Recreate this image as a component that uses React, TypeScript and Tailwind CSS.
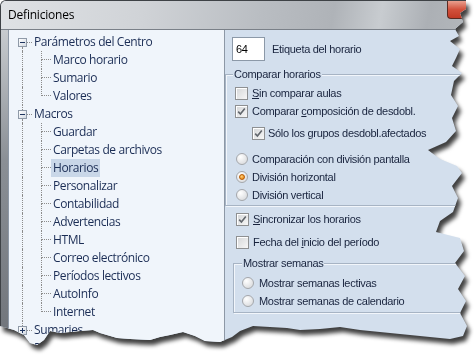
import React from "react";

const dot = "border-dotted border-[#8c8c8c]";

function Expander({ plus }: { plus?: boolean }) {
  return (
    <div className="grid h-[9px] w-[9px] shrink-0 place-items-center border border-[#8f9aa8] bg-gradient-to-br from-white to-[#d3dae3]">
      <div className="h-px w-[5px] bg-[#1e3560] [grid-area:1/1]" />
      {plus && <div className="h-[5px] w-px bg-[#1e3560] [grid-area:1/1]" />}
    </div>
  );
}

type TreeItem = {
  label: string;
  level: 0 | 1;
  plus?: boolean;
  first?: boolean;
  last?: boolean;
  selected?: boolean;
};

const items: TreeItem[] = [
  { label: "Parámetros del Centro", level: 0, first: true },
  { label: "Marco horario", level: 1 },
  { label: "Sumario", level: 1 },
  { label: "Valores", level: 1, last: true },
  { label: "Macros", level: 0 },
  { label: "Guardar", level: 1 },
  { label: "Carpetas de archivos", level: 1 },
  { label: "Horarios", level: 1, selected: true },
  { label: "Personalizar", level: 1 },
  { label: "Contabilidad", level: 1 },
  { label: "Advertencias", level: 1 },
  { label: "HTML", level: 1 },
  { label: "Correo electrónico", level: 1 },
  { label: "Períodos lectivos", level: 1 },
  { label: "AutoInfo", level: 1 },
  { label: "Internet", level: 1, last: true },
  { label: "Sumaries", level: 0, plus: true },
  { label: "Datos", level: 0, plus: true },
];

function TreeRow({ it }: { it: TreeItem }) {
  const label = (
    <span
      className={`h-full whitespace-nowrap px-[2px] leading-[18px] ${
        it.selected ? "bg-[#c9d7e8]" : ""
      }`}
    >
      {it.label}
    </span>
  );
  if (it.level === 0) {
    return (
      <div className="flex h-[18px] items-center pl-[9px]">
        <div className="flex h-full w-[9px] shrink-0 flex-col items-center">
          <div className={`w-0 flex-1 ${it.first ? "" : `border-l ${dot}`}`} />
          <Expander plus={it.plus} />
          <div className={`w-0 flex-1 border-l ${dot}`} />
        </div>
        <div className={`w-[5px] shrink-0 border-t ${dot}`} />
        {label}
      </div>
    );
  }
  return (
    <div className="flex h-[18px] items-center pl-[9px]">
      <div className="flex h-full w-[9px] shrink-0 justify-center">
        <div className={`h-full w-0 border-l ${dot}`} />
      </div>
      <div className="w-[14px] shrink-0" />
      <div className="flex h-full w-[10px] shrink-0 flex-col">
        <div className={`h-[9px] border-b border-l ${dot}`} />
        <div className={`flex-1 ${it.last ? "" : `border-l ${dot}`}`} />
      </div>
      {label}
    </div>
  );
}

function Check({ checked }: { checked?: boolean }) {
  return (
    <span className="flex h-[13px] w-[13px] shrink-0 items-center justify-center border border-[#8e9092] bg-gradient-to-br from-[#d4d6d8] to-[#f7f7f7] shadow-[inset_1px_1px_0_#ffffff]">
      {checked && (
        <svg width="9" height="9" viewBox="0 0 9 9">
          <path d="M1.2 4.6 L3.4 7 L7.8 1.4" stroke="#62676d" strokeWidth="1.6" fill="none" />
        </svg>
      )}
    </span>
  );
}

function Radio({ on }: { on?: boolean }) {
  return (
    <span className="flex h-[12px] w-[12px] shrink-0 items-center justify-center rounded-full border border-[#a4a7ab] bg-[radial-gradient(circle_at_35%_30%,#ffffff,#d2d4d7)]">
      {on && (
        <span className="h-[6px] w-[6px] rounded-full border border-[#b85a00] bg-[radial-gradient(circle_at_40%_35%,#ffd27a,#e27400)]" />
      )}
    </span>
  );
}

const clip =
  "[clip-path:polygon(0_0,466px_0,466px_9px,460px_13px,463px_22px,455px_29px,459px_36px,450px_41px,460px_49px,456px_58px,452px_66px,462px_73px,454px_81px,451px_95px,458px_106px,452px_118px,456px_131px,446px_142px,428px_150px,440px_159px,457px_166px,462px_173px,452px_186px,458px_198px,453px_212px,440px_221px,436px_232px,460px_238px,464px_251px,455px_263px,465px_276px,458px_289px,466px_301px,460px_313px,467px_326px,463px_336px,450px_339px,420px_336px,390px_333px,360px_330px,340px_327px,320px_329px,300px_330px,287px_328px,270px_327px,253px_326px,240px_331px,232px_337px,220px_342px,205px_341px,195px_336px,183px_332px,170px_335px,160px_337px,150px_340px,130px_339px,117px_338px,100px_333px,93px_330px,80px_331px,60px_333px,50px_331px,44px_340px,37px_345px,30px_343px,24px_335px,14px_330px,0_326px)]";

export default function App() {
  const rt =
    "text-[11px] tracking-[-0.3px] text-[#18233d] [font-family:'Liberation_Sans',Arial,sans-serif]";
  return (
    <div className="h-[355px] w-[474px] overflow-hidden bg-white">
      <div className="h-full w-full drop-shadow-[3px_5px_2px_rgba(0,0,0,0.75)]">
        <div
          className={`flex h-full w-full flex-col overflow-hidden rounded-tl-[6px] border-l border-t border-[#3e4246] bg-[#d3dfed] ${clip}`}
        >
          {/* title bar */}
          <div className="flex h-[28px] shrink-0 items-start bg-[linear-gradient(100deg,#dfe2e5_0%,#d0d3d7_30%,#b9bdc2_55%,#afb3b8_70%,#c8ccd0_80%,#acb0b5_90%,#b4b8bc_100%)]">
            <span className="ml-[7px] mt-[6px] text-[12px] leading-[16px] tracking-[-0.2px] text-black [font-family:'Open_Sans','Noto_Sans',sans-serif]">
              Definiciones
            </span>
            <div className="ml-auto mr-[8px] h-[18px] w-[19px] rounded-bl-[4px] border-b border-l border-[#5a2a22] bg-[linear-gradient(180deg,#e9a08f,#d2513c_50%,#c23a25)]" />
          </div>
          {/* body */}
          <div className="flex flex-1 border-t border-[#7a8088]">
            <div className="w-[7px] shrink-0 bg-[linear-gradient(180deg,#c7cbcf,#8a8f95_40%,#6e7278)]" />
            <div className="w-[217px] shrink-0 border-l border-r border-[#8d98a6] bg-[#f0f5fb] pt-[3px] text-[12px] tracking-[-0.4px] text-[#1b2d55] [font-family:'Open_Sans','Noto_Sans',sans-serif]">
              {items.map((it) => (
                <TreeRow key={it.label} it={it} />
              ))}
            </div>
            <div className={`flex min-w-0 flex-1 flex-col pt-[7px] ${rt}`}>
              <div className="flex h-[24px] items-center pl-[7px]">
                <div className="flex h-[24px] w-[33px] items-center border border-[#8c99a8] bg-white pl-[3px] text-[#000]">
                  64
                </div>
                <span className="ml-[7px]">Etiqueta del horario</span>
              </div>
              {/* group 1 */}
              <div className="mt-[13px] border border-[#a7b4c4] pb-[1px] shadow-[inset_1px_1px_0_#f2f6fb,1px_1px_0_#f2f6fb]">
                <div className="-mt-[7px] ml-[7px] h-[13px] w-fit bg-[#d3dfed] px-[1px] leading-[13px]">
                  Comparar horarios
                </div>
                <div className="pt-[3px]">
                  <div className="flex h-[18px] items-center pl-[9px]">
                    <Check />
                    <span className="ml-[4px]">
                      <span className="underline">S</span>in comparar aulas
                    </span>
                  </div>
                  <div className="flex h-[19px] items-center pl-[9px]">
                    <Check checked />
                    <span className="ml-[4px]">
                      Comparar <span className="underline">c</span>omposición de desdobl.
                    </span>
                  </div>
                  <div className="flex h-[24px] items-center pl-[26px]">
                    <Check checked />
                    <span className="ml-[3px]">Sólo los grupos desdobl.afectados</span>
                  </div>
                  <div className="mt-[5px] flex h-[18px] items-center pl-[10px]">
                    <Radio />
                    <span className="ml-[4px]">Comparación con división pantalla</span>
                  </div>
                  <div className="flex h-[18px] items-center pl-[10px]">
                    <Radio on />
                    <span className="ml-[4px]">División horizontal</span>
                  </div>
                  <div className="flex h-[18px] items-center pl-[10px]">
                    <Radio />
                    <span className="ml-[4px]">División vertical</span>
                  </div>
                </div>
              </div>
              <div className="mt-[2px] flex h-[23px] items-center pl-[11px]">
                <Check checked />
                <span className="ml-[4px]">
                  <span className="underline">S</span>incronizar los horarios
                </span>
              </div>
              <div className="flex h-[23px] items-center pl-[11px]">
                <Check />
                <span className="ml-[4px]">
                  Fecha del <span className="underline">i</span>nicio del período
                </span>
              </div>
              {/* group 2 */}
              <div className="ml-[8px] mt-[9px] border border-[#a7b4c4] pb-[2px] shadow-[inset_1px_1px_0_#f2f6fb,1px_1px_0_#f2f6fb]">
                <div className="-mt-[7px] ml-[8px] h-[13px] w-fit bg-[#d3dfed] px-[1px] leading-[13px]">
                  Mostrar semanas
                </div>
                <div className="pt-[4px]">
                  <div className="flex h-[18px] items-center pl-[8px]">
                    <Radio />
                    <span className="ml-[5px]">Mostrar semanas lectivas</span>
                  </div>
                  <div className="flex h-[18px] items-center pl-[8px]">
                    <Radio />
                    <span className="ml-[5px]">Mostrar semanas de calendario</span>
                  </div>
                </div>
              </div>
            </div>
          </div>
        </div>
      </div>
    </div>
  );
}
